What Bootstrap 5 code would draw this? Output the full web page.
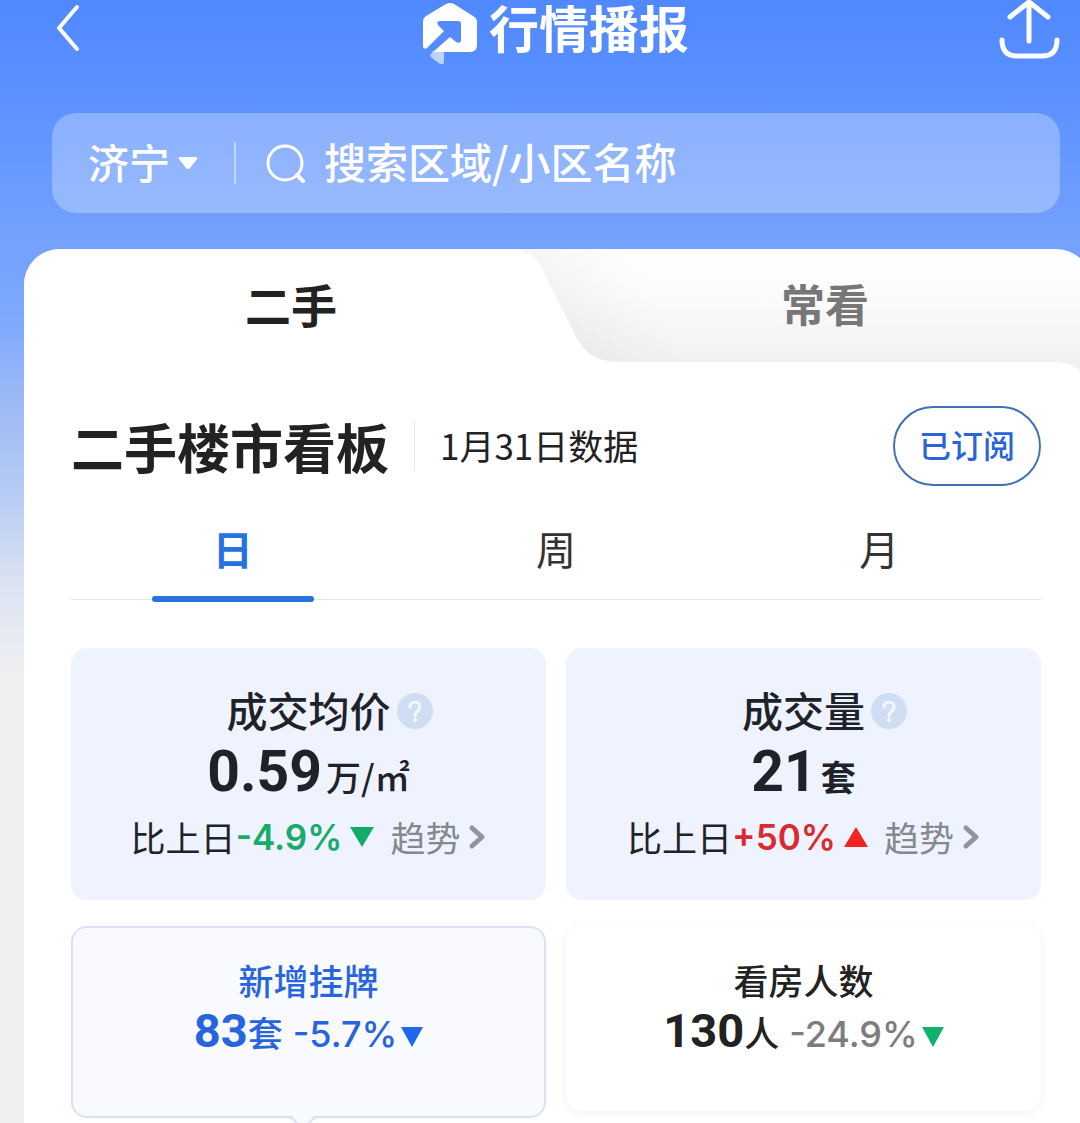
<!DOCTYPE html>
<html lang="zh-CN">
<head>
<meta charset="utf-8">
<meta name="viewport" content="width=device-width, initial-scale=1">
<title>行情播报</title>
<link href="https://cdn.jsdelivr.net/npm/bootstrap@5.3.0/dist/css/bootstrap.min.css" rel="stylesheet">
<style>
body{font-family:"Noto Sans CJK SC",sans-serif;color:#222;background:#f0f0f0}
svg{display:block;flex:none}
.app{min-height:100vh;overflow:hidden;background:linear-gradient(#5088ff 0,#5a90ff 90px,#74a1fd 240px,#7ea9fd 320px,#9cb9f6 400px,#b9cdf5 500px,#dde4f2 590px,#f0f0f0 680px)}
.topbar{height:113px;padding:0 20px 0 52px}
.topbar-inner{height:58px}
.plain{background:none;border:0;padding:0;color:inherit}
.brand{font-size:50px;line-height:52px;gap:12px}
.side{flex:1 1 0}
.searchbox{height:100px;margin:0 20px 0 52px;padding:0 36px;border-radius:24px;background:rgba(255,255,255,.28);color:#fff}
.city{appearance:none;background:none;border:0;color:#fff;font-size:41px;line-height:60px;font-weight:500;padding:0 0 4px;outline:0}
.rule{width:2px;height:42px;background:rgba(255,255,255,.45);margin:0 30px 0 36px}
.query{background:none;border:0;outline:0;color:#fff;font-size:42px;line-height:60px;font-weight:500;padding:0 0 4px;margin-left:18px;min-width:0}
.query::placeholder{color:#fff;opacity:1}
.sheet{margin:36px -12px 0 24px;border-radius:36px 36px 0 0;background:linear-gradient(#fff 0,#fbfbfb 50px,#f2f2f2 113px,#f2f2f2 160px,#fff 161px);overflow:hidden}
.maintab{height:113px;font-size:44px;line-height:66px;font-weight:700;color:#777;padding-bottom:6px}
.maintab.on{background:#fff;color:#222;font-size:46px}
.edge{left:calc(50% - 44px);top:0}
.panel{background:#fff;border-top-right-radius:36px;padding:44px 51px 6px 47px}
.board{font-size:53px;line-height:80px;font-weight:700;margin:0}
.board-rule{width:1px;height:50px;background:#e4e6ea;margin:0 25px}
.date{font-size:35px;line-height:50px;padding-bottom:2px}
.subbtn{width:148px;height:80px;border:2px solid #3f70b8;border-radius:40px;background:#fff;color:#2965d8;font-size:32px;font-weight:500}
.periods{height:114px;border-bottom:1px solid #e3e5e8}
.period{font-size:40px;line-height:60px;padding-bottom:2px;padding-top:12px;color:#333}
.period.on{color:#2673e0;font-weight:700}
.period.on::after{content:"";position:absolute;left:25%;right:25%;bottom:-3px;height:6px;border-radius:3px;background:#2673e0}
.stats{margin-top:48px;gap:26px 20px}
.stat{flex:1 1 40%;height:252px;border-radius:16px;background:#eff3ff;color:#1e2229;padding-top:30px}
.stat-name{font-size:41px;line-height:62px;font-weight:500}
.help{left:100%;top:15px;margin-left:6px}
.stat-val{line-height:64px;height:64px}
.big{font-family:Roboto,sans-serif;font-size:57px;font-weight:700}
.unit{font-size:35px;font-weight:500;margin-left:4px}
.stat-cmp{font-size:35px;line-height:50px;margin-top:8px}
.pct{font-family:Inter,sans-serif;font-size:35px;font-weight:600}
.more{color:#85888e;text-decoration:none}
.mini{flex:1 1 40%;height:192px;border-radius:16px;padding-top:28px}
.mini.on{background:#f8fafe;border:2px solid #d9e2f7;color:#2765de;padding-top:26px}
.mini.off{background:#fff;height:185px;box-shadow:0 2px 10px rgba(0,0,0,.06)}
.mini-name{font-size:35px;line-height:52px;font-weight:500}
.mini-val{height:50px;line-height:50px}
.mid{font-family:Roboto,sans-serif;font-size:47px;font-weight:700}
.munit{font-size:35px;font-weight:500}
.mpct{font-family:Inter,sans-serif;font-size:36px;font-weight:500;margin-left:10px}
.notch{left:50%;top:100%;margin-left:-22px}
</style>
<script src="https://cdn.jsdelivr.net/npm/bootstrap@5.3.0/dist/js/bootstrap.bundle.min.js"></script>
</head>
<body>
<div class="app">
  <header class="topbar text-white">
    <div class="topbar-inner d-flex align-items-start">
      <div class="side"><button class="plain" aria-label="返回"><svg width="32" height="56" viewBox="0 0 32 56" fill="none" stroke="#fff" stroke-width="4" stroke-linecap="round" stroke-linejoin="round"><path d="M25 7 7 28l18 21"/></svg></button></div>
      <h1 class="brand d-flex align-items-start fw-bold m-0">
        <svg width="54" height="66" viewBox="0 0 54 66"><path d="M10 51h11v11q0 3-4 2l-8-6q-3-2-1-4z" fill="#bcd3ff"/><path fill="#fff" d="M31 4l19 12q4 2 4 6v23q0 7-7 7H10l17-15 6 5q5 2 5-2V24q0-3-3-3H17q-4 0-2 4l6 6L4 48q-4 2-4-2V22q0-4 3-6L23 4q4-2 8 0z"/></svg>
        <span>行情播报</span>
      </h1>
      <div class="side d-flex justify-content-end"><button class="plain" aria-label="分享"><svg width="62" height="60" viewBox="0 0 62 60" fill="none" stroke="#fff" stroke-width="5" stroke-linecap="round" stroke-linejoin="round"><path d="M31 41V2M12 17 31 2l19 15M4 40q0 16 15 16h25q15 0 15-16"/></svg></button></div>
    </div>
  </header>

  <form class="searchbox d-flex align-items-center">
    <select class="city" aria-label="城市"><option>济宁</option></select>
    <svg class="ms-2" width="20" height="14" viewBox="0 0 20 14"><path d="M2 1h16q2 0 1 2l-7 9q-2 2-4 0L1 3Q0 1 2 1z" fill="#fff"/></svg>
    <span class="rule"></span>
    <svg width="40" height="40" viewBox="0 0 40 40" fill="none" stroke="#fff" stroke-width="3" stroke-linecap="round"><circle cx="19" cy="20" r="17"/><path d="m31 32 6 6" stroke-width="4"/></svg>
    <input class="query flex-grow-1" type="text" aria-label="搜索" placeholder="搜索区域/小区名称">
  </form>

  <main class="sheet">
    <nav class="d-flex position-relative">
      <svg class="edge position-absolute" width="260" height="113" viewBox="0 0 260 113">
        <defs>
          <linearGradient id="base" x1="0" y1="0" x2="0" y2="1"><stop offset="0" stop-color="#fff"/><stop offset=".44" stop-color="#fbfbfb"/><stop offset="1" stop-color="#f2f2f2"/></linearGradient>
          <linearGradient id="shade" gradientUnits="userSpaceOnUse" x1="46" y1="60" x2="130" y2="18"><stop offset="0" stop-color="#000" stop-opacity=".035"/><stop offset="1" stop-color="#000" stop-opacity="0"/></linearGradient>
        </defs>
        <path d="M0 0h260v113H0z" fill="url(#base)"/>
        <path d="M0 0h260v113H0z" fill="url(#shade)"/>
        <path d="M0 0c18 1 26 14 32 28l27 54c10 20 20 31 48 31H0z" fill="#fff"/>
      </svg>
      <button class="plain maintab on w-50">二手</button>
      <button class="plain maintab w-50 position-relative">常看</button>
    </nav>
    <section class="panel position-relative">
      <div class="d-flex align-items-center">
        <h2 class="board">二手楼市看板</h2>
        <span class="board-rule"></span>
        <span class="date">1月31日数据</span>
        <button class="subbtn ms-auto px-0 pt-0 pb-1">已订阅</button>
      </div>
      <div class="periods d-flex text-center">
        <button class="plain period on col position-relative">日</button>
        <button class="plain period col">周</button>
        <button class="plain period col">月</button>
      </div>
      <div class="stats d-flex flex-wrap text-center align-items-start">
        <article class="stat">
          <div class="stat-name"><span class="position-relative d-inline-block">成交均价<svg class="help position-absolute" width="36" height="36" viewBox="0 0 36 36"><circle cx="18" cy="18" r="18" fill="#cfdef2"/><path d="M13 14q0-5 5-5t5 5c0 4-5 4-5 9" fill="none" stroke="#f2f7ff" stroke-width="3" stroke-linecap="round"/><circle cx="18" cy="27" r="2" fill="#f2f7ff"/></svg></span></div>
          <div class="stat-val"><span class="big">0.59</span><span class="unit">万/㎡</span></div>
          <div class="stat-cmp d-flex justify-content-center align-items-center"><span>比上日</span><span class="pct" style="color:#19ab6b">-4.9%</span><svg class="ms-2" width="24" height="20"><path d="M0 0h24L12 20z" fill="#10ad69"/></svg>
            <a class="more d-flex align-items-center ms-3" href="#">趋势<svg class="ms-2" width="18" height="26" viewBox="0 0 18 26" fill="none" stroke="#92959d" stroke-width="5" stroke-linecap="round" stroke-linejoin="round"><path d="m4 4 10 9-10 9"/></svg></a></div>
        </article>
        <article class="stat">
          <div class="stat-name"><span class="position-relative d-inline-block">成交量<svg class="help position-absolute" width="36" height="36" viewBox="0 0 36 36"><circle cx="18" cy="18" r="18" fill="#cfdef2"/><path d="M13 14q0-5 5-5t5 5c0 4-5 4-5 9" fill="none" stroke="#f2f7ff" stroke-width="3" stroke-linecap="round"/><circle cx="18" cy="27" r="2" fill="#f2f7ff"/></svg></span></div>
          <div class="stat-val"><span class="big">21</span><span class="unit fw-bold">套</span></div>
          <div class="stat-cmp d-flex justify-content-center align-items-center"><span>比上日</span><span class="pct" style="color:#d92c30">+50%</span><svg class="ms-2" width="24" height="20"><path d="M0 20h24L12 0z" fill="#ee2524"/></svg>
            <a class="more d-flex align-items-center ms-3" href="#">趋势<svg class="ms-2" width="18" height="26" viewBox="0 0 18 26" fill="none" stroke="#92959d" stroke-width="5" stroke-linecap="round" stroke-linejoin="round"><path d="m4 4 10 9-10 9"/></svg></a></div>
        </article>
        <article class="mini on position-relative">
          <div class="mini-name">新增挂牌</div>
          <div class="mini-val d-flex justify-content-center align-items-baseline"><span class="mid">83</span><span class="munit">套</span><span class="mpct">-5.7%</span><svg class="ms-1" width="22" height="20"><path d="M0 0h22L11 20z" fill="#1d68ee"/></svg></div>
          <svg class="notch position-absolute" width="32" height="16" viewBox="0 0 32 16"><path d="M0-2q4 0 7 4l6 7q3 3 6 0l6-7q3-4 7-4z" fill="#f8fafe"/><path d="M0 1q4 0 7 3l6 6q3 3 6 0l6-6q3-3 7-3" fill="none" stroke="#d9e2f7" stroke-width="2"/></svg>
        </article>
        <article class="mini off">
          <div class="mini-name">看房人数</div>
          <div class="mini-val d-flex justify-content-center align-items-baseline"><span class="mid">130</span><span class="munit">人</span><span class="mpct" style="color:#7d7d7d">-24.9%</span><svg class="ms-1" width="22" height="20"><path d="M0 0h22L11 20z" fill="#10b16c"/></svg></div>
        </article>
      </div>
    </section>
  </main>
</div>
</body>
</html>
